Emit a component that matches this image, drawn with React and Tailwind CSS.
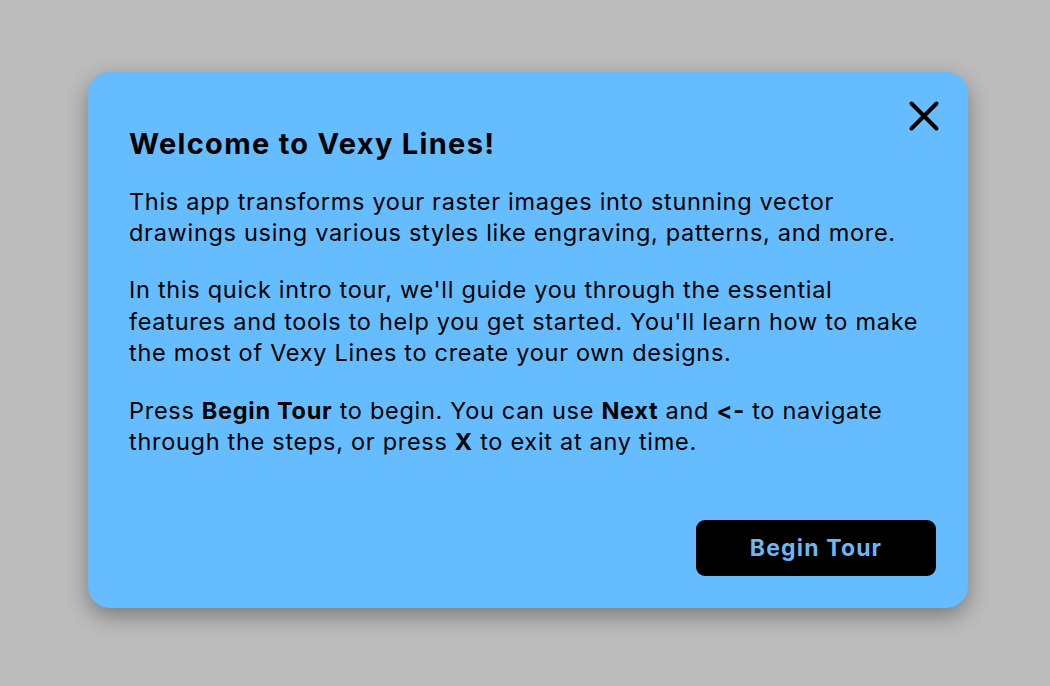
import React from 'react';

const CloseIcon = () => (
  <svg width="32" height="32" viewBox="0 0 32 32" fill="none">
    <path d="M3.5 3.5L28.5 28.5M28.5 3.5L3.5 28.5" stroke="black" strokeWidth="4" strokeLinecap="round" />
  </svg>
);

const WelcomeDialog = () => {
  return (
    <div className="relative w-[880px] h-[536px] rounded-[22px] bg-[#65bcfe] shadow-[0_8px_22px_rgba(0,0,0,0.35)] flex flex-col">
      <button className="absolute right-[28px] top-[28px] p-0">
        <CloseIcon />
      </button>

      <div className="pl-[41px] pr-[34px] pt-[54px] text-black">
        <h2 className="text-[29px] leading-[36px] tracking-[0.045em] font-bold mb-[24px]">Welcome to Vexy Lines!</h2>
        <div className="text-[23.5px] tracking-[0.03em]">
          <p className="leading-[31px] mb-[26px]">
            This app transforms your raster images into stunning vector drawings using various styles like engraving, patterns, and more.
          </p>
          <p className="leading-[31.5px] mb-[26px]">
            In this quick intro tour, we'll guide you through the essential features and tools to help you get started. You'll learn how to make the most of Vexy Lines to create your own designs.
          </p>
          <p className="leading-[31px]">
            Press <b>Begin Tour</b> to begin. You can use <b>Next</b> and <b>&lt;-</b> to navigate through the steps, or press <b>X</b> to exit at any time.
          </p>
        </div>
      </div>

      <div className="mt-auto flex justify-end pr-[32px] pb-[32px]">
        <button className="w-[240px] h-[56px] rounded-[9px] bg-black text-[#6db6f3] text-[23px] tracking-[0.05em] font-bold">
          Begin Tour
        </button>
      </div>
    </div>
  );
};

export default function App() {
  return (
    <div className="w-[1050px] h-[686px] bg-[#bdbcbd] pl-[88px] pt-[72px] font-['Inter',sans-serif] [font-variant-ligatures:none] [font-feature-settings:'calt'_0,'liga'_0]">
      <WelcomeDialog />
    </div>
  );
}
